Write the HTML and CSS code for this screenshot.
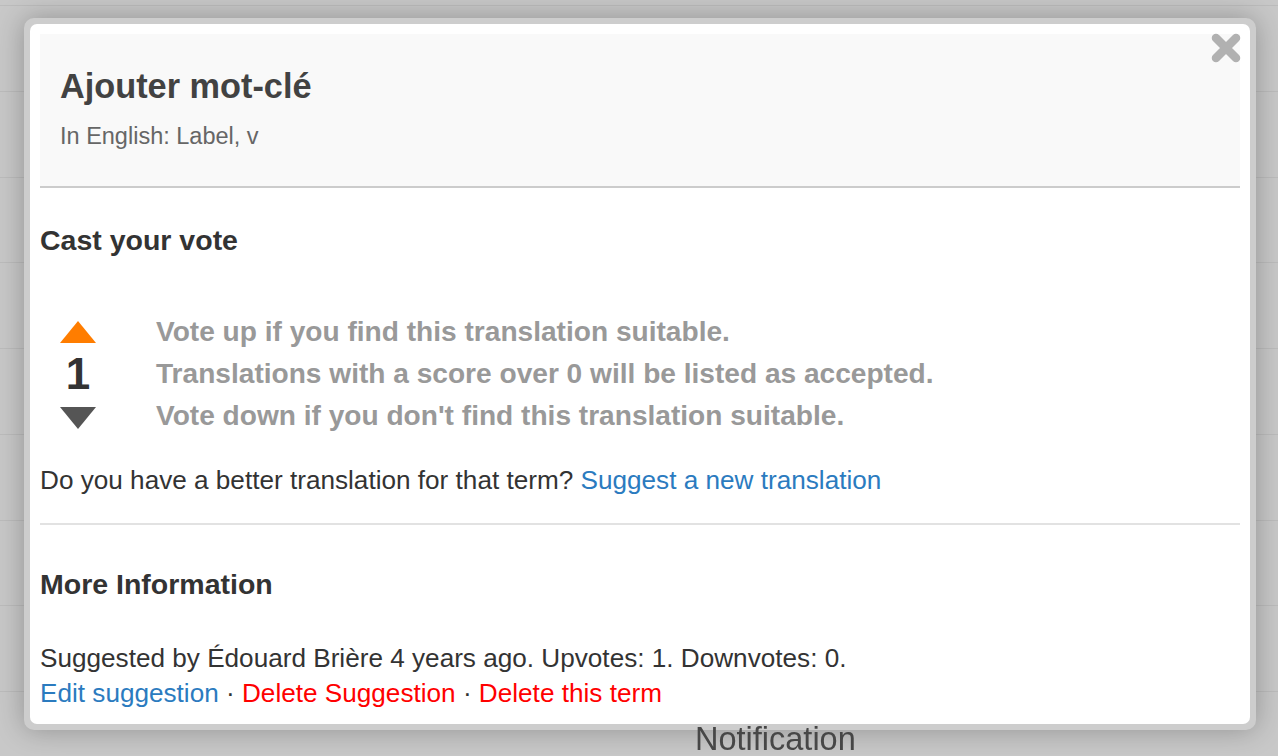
FILE: index.html
```html
<!DOCTYPE html>
<html lang="en">
<head>
  <meta charset="UTF-8">
  <title>Ajouter mot-clé</title>
  <link rel="stylesheet" href="styles.css">
</head>
<body>
  <!-- page behind the overlay -->
  <div class="page">
    <div class="row"></div>
    <div class="row"></div>
    <div class="row"></div>
    <div class="row"></div>
    <div class="row"></div>
    <div class="row"></div>
    <div class="row"></div>
    <div class="row"></div>
    <div class="row"><span class="row-label">Notification</span></div>
  </div>

  <div class="modal">
    <div class="dialog">
      <a class="close" href="#" title="Close">
        <svg width="30" height="30" viewBox="0 0 30 30">
          <path d="M5 5 L25 25 M25 5 L5 25" stroke="#b1b1b1" stroke-width="8.5" stroke-linecap="round"/>
        </svg>
      </a>

      <div class="dialog-header">
        <h2 class="title">Ajouter mot-clé</h2>
        <div class="subtitle">In English: Label, v</div>
      </div>

      <h3 class="section-title vote-title">Cast your vote</h3>
      <div class="vote">
        <div class="vote-controls">
          <span class="arrow up"></span>
          <span class="score">1</span>
          <span class="arrow down"></span>
        </div>
        <div class="vote-help">
          <div>Vote up if you find this translation suitable.</div>
          <div>Translations with a score over 0 will be listed as accepted.</div>
          <div>Vote down if you don't find this translation suitable.</div>
        </div>
      </div>
      <p class="text better">Do you have a better translation for that term? <a class="link" href="#">Suggest a new translation</a></p>

      <hr class="divider">

      <h3 class="section-title info-title">More Information</h3>
      <p class="text info">
        Suggested by Édouard Brière 4 years ago. Upvotes: 1. Downvotes: 0.<br>
        <a class="link" href="#">Edit suggestion</a> · <a class="link danger" href="#">Delete Suggestion</a> · <a class="link danger" href="#">Delete this term</a>
      </p>
    </div>
  </div>
</body>
</html>
```

FILE: styles.css
```css
html, body {
  height: 100%;
}
body {
  margin: 0;
  font-family: "Liberation Sans", Arial, sans-serif;
  background-color: #c8c8c8;
  color: #333;
  overflow: hidden;
}
/* Background page */
.page {
  padding-top: 5px;
}
.row {
  box-sizing: border-box;
  height: 85.75px;
  border-top: 1px solid #bcbcbc;
}
.row-label {
  position: relative;
  z-index: 2;
  display: block;
  padding: 31px 0 0 695px;
  font-size: 32.5px;
  line-height: 32px;
  color: #474747;
}
/* Modal */
.modal {
  position: fixed;
  z-index: 1;
  top: 18px;
  left: 24px;
  width: 1232px;
  height: 712px;
  box-sizing: border-box;
  border: 6px solid #cdcdcd;
  border-radius: 10px;
  box-shadow: 0 0 28px rgba(0, 0, 0, 0.28);
  background-color: #cdcdcd;
}
.dialog {
  position: relative;
  height: 100%;
  box-sizing: border-box;
  padding: 10px;
  background-color: #fff;
  border-radius: 7px;
}
.close {
  position: absolute;
  top: 9px;
  right: 9px;
  width: 30px;
  height: 30px;
  display: block;
}
.close svg {
  display: block;
}
.dialog-header {
  height: 154px;
  box-sizing: border-box;
  padding: 32px 20px 0;
  background-color: #f9f9f9;
  border-bottom: 2px solid #cccccc;
}
.title {
  margin: 0;
  font-size: 34.3px;
  line-height: 40px;
  font-weight: bold;
  color: #424242;
}
.subtitle {
  margin-top: 16px;
  font-size: 23.5px;
  line-height: 28px;
  color: #666;
}
.section-title {
  margin: 0;
  font-size: 28.5px;
  line-height: 32px;
  font-weight: bold;
  color: #333;
}
.vote-title {
  margin-top: 36px;
}
.vote {
  display: flex;
  margin-top: 55px;
}
.vote-controls {
  width: 116px;
  display: flex;
  flex-direction: column;
  align-items: center;
  padding-right: 40px;
  box-sizing: border-box;
}
.arrow {
  width: 0;
  height: 0;
  border-left: 18px solid transparent;
  border-right: 18px solid transparent;
}
.arrow.up {
  margin-top: 10px;
  border-bottom: 22px solid #ff7d00;
}
.arrow.down {
  margin-top: 11px;
  border-top: 22px solid #555;
}
.score {
  margin-top: 9px;
  font-size: 44px;
  line-height: 44px;
  font-weight: bold;
  color: #333;
}
.vote-help {
  font-size: 28.1px;
  line-height: 42px;
  font-weight: bold;
  color: #999;
}
.text {
  margin: 0;
  font-size: 26.15px;
  color: #333;
}
.better {
  margin-top: 25px;
  line-height: 36px;
}
.divider {
  margin: 25px 0 0;
  border: 0;
  border-top: 2px solid #e2e2e2;
}
.info-title {
  margin-top: 43px;
}
.info {
  margin-top: 41px;
  line-height: 35px;
}
.link {
  color: #2b7bbf;
  text-decoration: none;
}
.link.danger {
  color: #ff0000;
}
```
